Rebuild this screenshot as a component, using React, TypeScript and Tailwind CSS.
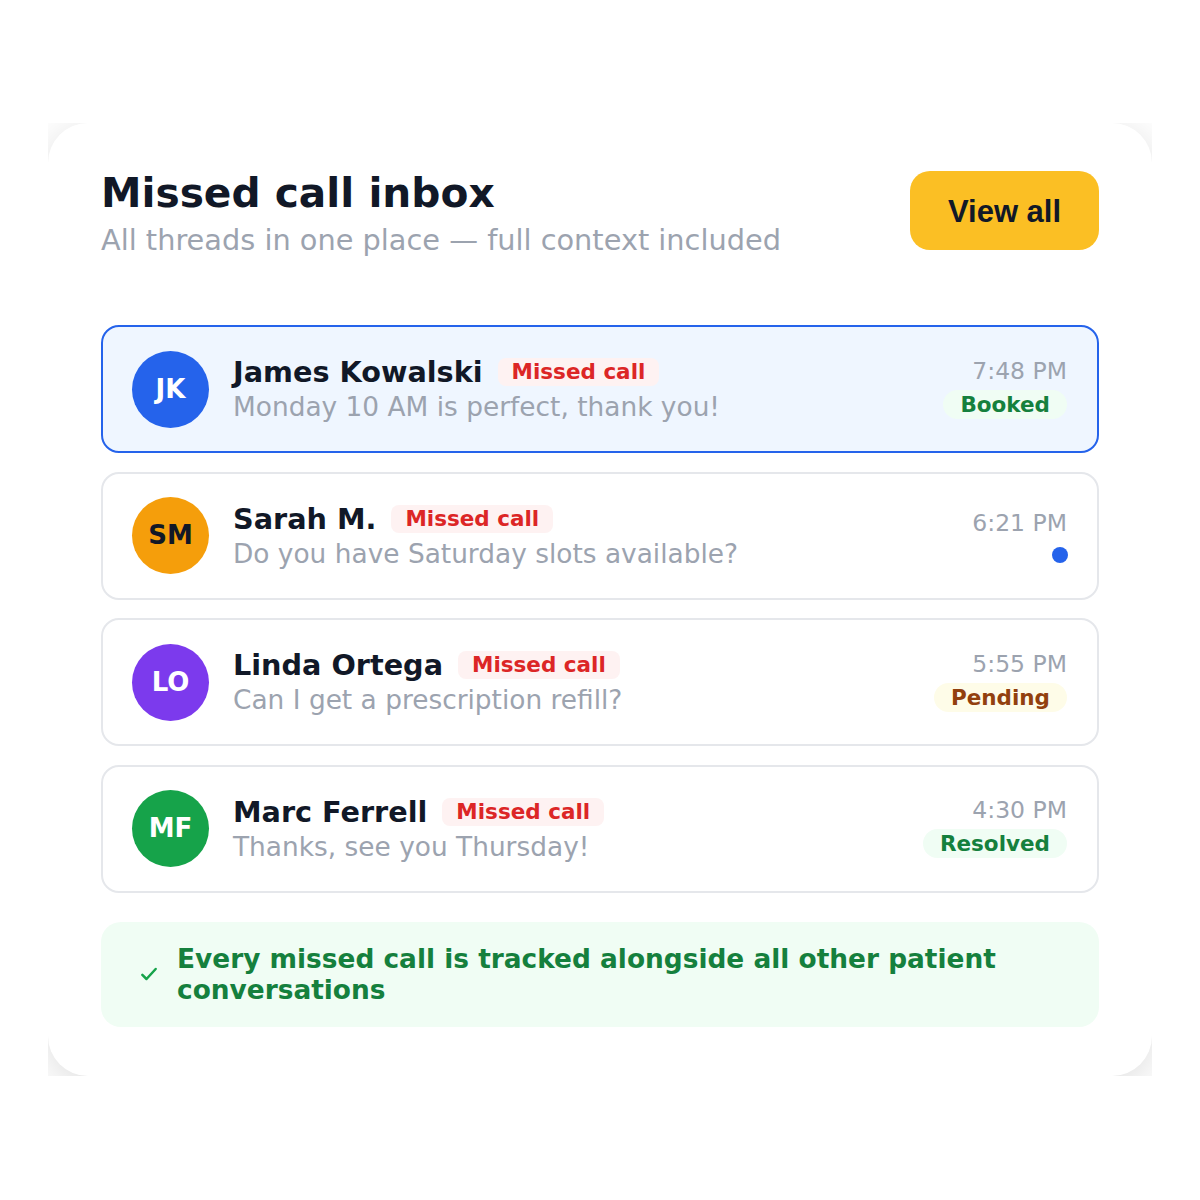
const threads = [
  {
    initials: "JK",
    name: "James Kowalski",
    message: "Monday 10 AM is perfect, thank you!",
    time: "7:48 PM",
    avatar: "bg-[#2563eb] text-white",
    status: "Booked",
    statusClass: "bg-[#f0fdf4] text-[#15803d]",
    active: true,
  },
  {
    initials: "SM",
    name: "Sarah M.",
    message: "Do you have Saturday slots available?",
    time: "6:21 PM",
    avatar: "bg-[#f59e0b] text-[#111827]",
    status: null,
    statusClass: "",
    active: false,
  },
  {
    initials: "LO",
    name: "Linda Ortega",
    message: "Can I get a prescription refill?",
    time: "5:55 PM",
    avatar: "bg-[#7c3aed] text-white",
    status: "Pending",
    statusClass: "bg-[#fefce8] text-[#92400e]",
    active: false,
  },
  {
    initials: "MF",
    name: "Marc Ferrell",
    message: "Thanks, see you Thursday!",
    time: "4:30 PM",
    avatar: "bg-[#16a34a] text-white",
    status: "Resolved",
    statusClass: "bg-[#f0fdf4] text-[#15803d]",
    active: false,
  },
];

type Thread = (typeof threads)[number];

function ThreadRow({ t }: { t: Thread }) {
  return (
    <div
      className={
        t.active
          ? "flex h-[128px] items-center rounded-[18px] border-2 border-[#2563eb] bg-[#eff6ff] pl-[29px] pr-[30px]"
          : "flex h-[128px] items-center rounded-[18px] border-2 border-[#e5e7eb] bg-white pl-[29px] pr-[30px]"
      }
    >
      <div
        className={`flex h-[77px] w-[77px] shrink-0 items-center justify-center rounded-full text-[26px] font-bold ${t.avatar}`}
      >
        {t.initials}
      </div>
      <div className="ml-[24px] flex min-w-0 flex-1 flex-col">
        <div className="flex items-center gap-[15px]">
          <span className="text-[28.7px] font-bold leading-[36px] text-[#111827]">
            {t.name}
          </span>
          <span className="rounded-[8px] bg-[#fef2f2] px-[14px] text-[21.5px] font-bold leading-[28px] text-[#dc2626]">
            Missed call
          </span>
        </div>
        <div className="text-[26.4px] leading-[34px] text-[#9ca3af]">
          {t.message}
        </div>
      </div>
      {t.status ? (
        <div className="flex flex-col items-end pb-[5px]">
          <span className="text-[23.5px] leading-[32px] text-[#9ca3af]">
            {t.time}
          </span>
          <span
            className={`mt-[3px] rounded-full px-[17px] text-[21.5px] font-bold leading-[29px] ${t.statusClass}`}
          >
            {t.status}
          </span>
        </div>
      ) : (
        <div className="flex flex-col items-end pt-[6px]">
          <span className="text-[23.5px] leading-[32px] text-[#9ca3af]">
            {t.time}
          </span>
          <span className="mt-[8px] mb-[8px] mr-[-1px] h-[16px] w-[16px] rounded-full bg-[#2563eb]" />
        </div>
      )}
    </div>
  );
}

export default function App() {
  return (
    <div
      className="flex min-h-screen items-start justify-center bg-white pt-[123px]"
      style={{ fontFamily: '"DejaVu Sans", sans-serif' }}
    >
      <div className="w-[1104px] overflow-hidden">
        <div className="rounded-[40px] bg-white px-[53px] pt-[48px] pb-[49px] shadow-[0_8px_40px_rgba(0,0,0,0.14)]">
          <div className="flex items-start justify-between">
            <div className="-mt-[2px]">
              <h1 className="text-[40.7px] font-bold leading-[48px] text-[#111827]">
                Missed call inbox
              </h1>
              <p className="mt-[5px] text-[28.8px] leading-[36px] text-[#9ca3af]">
                All threads in one place — full context included
              </p>
            </div>
            <button
              className="h-[79px] w-[189px] rounded-[20px] bg-[#fbbf24] pt-[3px] text-[31px] font-bold text-[#111827]"
              style={{ fontFamily: '"Liberation Sans", Arial, sans-serif' }}
            >
              View all
            </button>
          </div>

          <div className="mt-[67px] flex flex-col gap-[18.67px]">
            {threads.map((t) => (
              <ThreadRow key={t.initials} t={t} />
            ))}
          </div>

          <div className="mt-[29px] flex h-[105px] items-center gap-[18px] rounded-[20px] bg-[#f0fdf4] px-[38px]">
            <svg
              width="20"
              height="20"
              viewBox="0 0 24 24"
              fill="none"
              stroke="#16a34a"
              strokeWidth="3"
              strokeLinecap="round"
              strokeLinejoin="round"
              className="shrink-0"
            >
              <path d="M4 13l5 5L20 6" />
            </svg>
            <p className="text-[26.4px] font-bold leading-[31px] text-[#15803d]">
              Every missed call is tracked alongside all other patient
              conversations
            </p>
          </div>
        </div>
      </div>
    </div>
  );
}
